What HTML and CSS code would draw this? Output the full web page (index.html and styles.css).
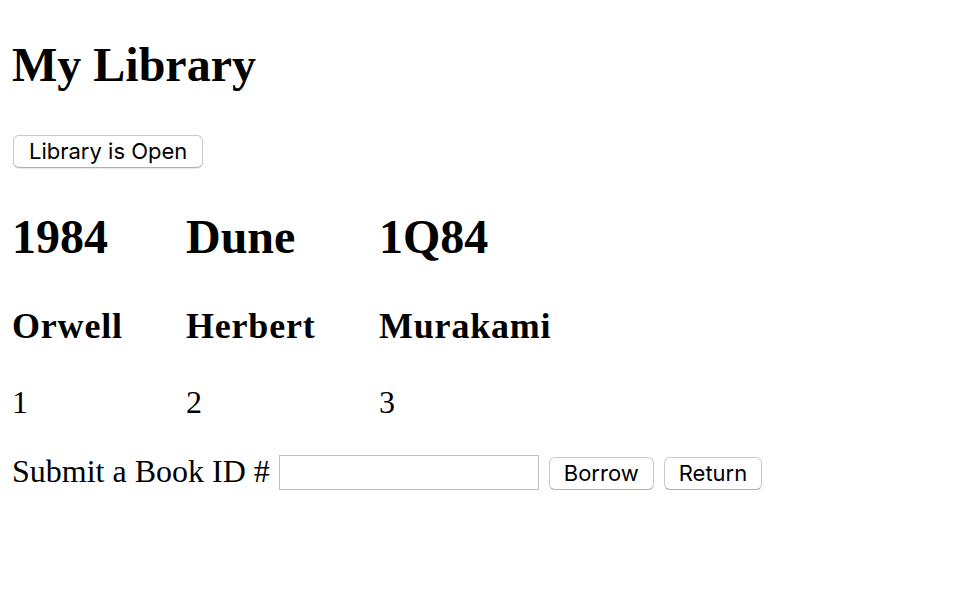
FILE: index.html
```html
<!DOCTYPE html>
<html lang="en">
<head>
<meta charset="utf-8">
<title>My Library</title>
<link rel="stylesheet" href="styles.css">
</head>
<body>
<div class="app">
  <h1 class="page-title">My Library</h1>
  <div class="status-row">
    <button class="btn" type="button">Library is Open</button>
  </div>
  <div class="books">
    <div class="book book-1">
      <h1 class="book-title">1984</h1>
      <h2 class="book-author">Orwell</h2>
      <p class="book-id">1</p>
    </div>
    <div class="book book-2">
      <h1 class="book-title">Dune</h1>
      <h2 class="book-author">Herbert</h2>
      <p class="book-id">2</p>
    </div>
    <div class="book book-3">
      <h1 class="book-title">1Q84</h1>
      <h2 class="book-author">Murakami</h2>
      <p class="book-id">3</p>
    </div>
  </div>
  <form class="book-form">
    <label class="form-label" for="bookId">Submit a Book ID #</label>
    <input class="form-input" id="bookId" type="text">
    <button class="btn btn-form" type="button">Borrow</button>
    <button class="btn btn-form" type="button">Return</button>
  </form>
</div>
</body>
</html>
```

FILE: styles.css
```css
html, body {
  margin: 0;
  padding: 0;
  background: #ffffff;
  color: #000000;
}

body {
  font-family: "Liberation Serif", "Times New Roman", serif;
}

.app {
  padding: 0 12px;
}

.page-title {
  margin: 37px 0 0;
  font-size: 48px;
  line-height: 55px;
  font-weight: bold;
}

.status-row {
  margin-top: 43px;
  display: flex;
}

.btn {
  font-family: Inter, "Liberation Sans", Arial, sans-serif;
  font-size: 22px;
  color: #000;
  background: #ffffff;
  border: 1px solid #c9c9c9;
  border-bottom-color: #b0b0b0;
  border-radius: 6px;
  box-shadow: 0 1px 1px rgba(0, 0, 0, 0.08);
  height: 33px;
  padding: 0 15px;
  margin: 0 0 0 1px;
  line-height: 31px;
}

.books {
  display: flex;
  margin-top: 41px;
}

.book-1 { width: 174px; }
.book-2 { width: 193px; }
.book-3 { flex: 1; }

.book-title {
  margin: 0;
  font-size: 48px;
  line-height: 55px;
  font-weight: bold;
}

.book-author {
  margin: 42px 0 0;
  font-size: 36px;
  line-height: 41px;
  font-weight: bold;
  letter-spacing: 0.8px;
}

.book-id {
  margin: 37px 0 0;
  font-size: 32px;
  line-height: 37px;
}

.book-form {
  display: flex;
  align-items: flex-start;
  margin: 34px 0 0;
}

.form-label {
  font-size: 32px;
  line-height: 32px;
  margin-right: 9px;
}

.form-input {
  box-sizing: border-box;
  width: 260px;
  height: 35px;
  margin: 0;
  border: 1px solid #c0c0c0;
  border-radius: 0;
  padding: 0 6px;
  font-size: 20px;
  background: #fff;
}

.btn-form {
  margin: 2px 0 0 10px;
  padding: 0 14px;
}
```
